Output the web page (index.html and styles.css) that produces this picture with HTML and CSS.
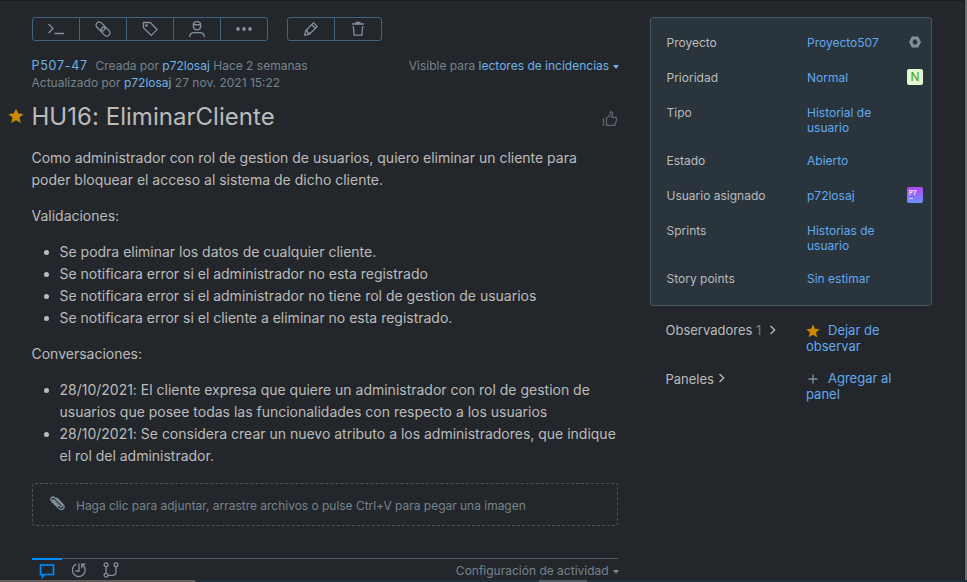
FILE: index.html
```html
<!DOCTYPE html>
<html lang="es">
<head>
<meta charset="utf-8">
<title>P507-47 HU16: EliminarCliente</title>
<link rel="stylesheet" href="styles.css">
</head>
<body>
<div class="window">
<div class="page">
  <main class="issue">
    <div class="toolbar">
      <div class="group">
        <button><svg width="18" height="16" viewBox="0 0 18 16"><path d="M1.500 3l4.500 4.500L1.500 12M7.500 12.500H17"/></svg></button>
        <button><svg width="16" height="16" viewBox="0 0 16 16"><rect x="0.500" y="2.300" width="10" height="6.200" rx="3.100" transform="rotate(45 5.500 5.400)"/><rect x="5.500" y="7.500" width="10" height="6.200" rx="3.100" transform="rotate(45 10.500 10.600)"/></svg></button>
        <button><svg width="16" height="16" viewBox="0 0 16 16"><path d="M1.500 1.500h6.700L15 8.600 9.300 14.400 1.500 6.800z"/><circle cx="4.500" cy="4.500" r=".7"/></svg></button>
        <button><svg width="18" height="18" viewBox="0 0 18 18"><path d="M5.300 5.200C5.300 2.700 6.500 1.600 9 1.600s3.700 1.100 3.700 3.600c0 2.900-1.500 4.600-3.700 4.600S5.300 8.100 5.300 5.200zM5.600 4.300c2 .6 4.800.6 6.800 0M1.600 17c.2-3 2-4.400 4.600-4.400h5.600c2.600 0 4.400 1.400 4.600 4.400"/></svg></button>
        <button><svg class="fill" width="18" height="16" viewBox="0 0 18 16"><circle cx="3" cy="8" r="1.900"/><circle cx="9" cy="8" r="1.900"/><circle cx="15" cy="8" r="1.900"/></svg></button>
      </div>
      <div class="group">
        <button><svg width="16" height="16" viewBox="0 0 16 16"><path d="M1.800 14.200l1-4.600L10.500 1.800l3.700 3.700-7.700 7.700zM8.700 3.700l3.600 3.600M2.800 9.600l1.500.3.300 1.700 1.700.2.200 1.400"/></svg></button>
        <button><svg width="16" height="16" viewBox="0 0 16 16"><path d="M2 3h12M5.500 1.500h5M3.300 5l.8 9.200h7.800l.8-9.200"/></svg></button>
      </div>
    </div>
    <div class="meta">
      <div><a class="id">P507-47</a>Creada por <a>p72losaj</a> Hace 2 semanas<br>Actualizado por <a>p72losaj</a> 27 nov. 2021 15:22</div>
      <div class="visibility">Visible para <a>lectores de incidencias <i class="caret"></i></a></div>
    </div>
    <div class="heading">
      <svg class="star" width="16" height="16" viewBox="0 0 16 16"><path d="M8 .5l2.200 5 5.500.5-4.200 3.600 1.300 5.500L8 12.200l-4.800 2.900 1.300-5.500L.3 6l5.500-.5z"/></svg>
      <h1>HU16: EliminarCliente</h1>
      <svg class="thumb" width="16" height="16" viewBox="0 0 16 16"><path d="M1.500 7v8M4.500 14.300V7.200l3.200-2.700L8.500 1h1.300l.8 1-.9 4.300h4.800v3.200l-1.700 4.800z"/></svg>
    </div>
    <article>
      <p>Como administrador con rol de gestion de usuarios, quiero eliminar un cliente para<br>poder bloquear el acceso al sistema de dicho cliente.</p>
      <p>Validaciones:</p>
      <ul>
        <li>Se podra eliminar los datos de cualquier cliente.</li>
        <li>Se notificara error si el administrador no esta registrado</li>
        <li>Se notificara error si el administrador no tiene rol de gestion de usuarios</li>
        <li>Se notificara error si el cliente a eliminar no esta registrado.</li>
      </ul>
      <p>Conversaciones:</p>
      <ul>
        <li>28/10/2021: El cliente expresa que quiere un administrador con rol de gestion de<br>usuarios que posee todas las funcionalidades con respecto a los usuarios</li>
        <li>28/10/2021: Se considera crear un nuevo atributo a los administradores, que indique<br>el rol del administrador.</li>
      </ul>
    </article>
    <div class="attach">
      <svg width="17" height="16" viewBox="0 0 17 16"><path d="M4.300 4.500l6.800 6.700c1.600 1.500 3-.1 1.700-1.500L6 3C3.300.6.100 3.700 2.700 6.400l6.500 6.500c4 3.800 8-.2 4.400-4L7.500 2.700M4.200 4.400c-1 1 .1 2 .1 2l5 5"/></svg>
      <span>Haga clic para adjuntar, arrastre archivos o pulse Ctrl+V para pegar una imagen</span>
    </div>
    <div class="activity">
      <div class="tab active"><svg width="16" height="16" viewBox="0 0 16 16"><path d="M1.500 2h13v9.500h-9L3.500 14v-2.500h-2z"/></svg></div>
      <div class="tab"><svg width="16" height="16" viewBox="0 0 16 16"><path d="M5.300 2.200a6.400 6.400 0 1 0 8.300 3.200M8 1.500V9H4.500M14.500 2.200h-3.700v4M11 2.500l3 3"/></svg></div>
      <div class="tab"><svg width="16" height="16" viewBox="0 0 16 16"><circle cx="3" cy="2.700" r="1.900"/><circle cx="13" cy="2.700" r="1.900"/><circle cx="3" cy="13.300" r="1.900"/><path d="M3 4.600v6.800M5 13.300h4c2 0 4-1 4-3.300V4.600"/></svg></div>
      <div class="settings">Configuración de actividad <i class="caret"></i></div>
    </div>
  </main>
  <aside>
    <div class="panel">
      <div class="field"><span>Proyecto</span><a>Proyecto507</a><svg class="nut" width="12" height="12" viewBox="0 0 12 12"><path d="M3.800 1.900h4.400L10.300 6l-2.100 4.100H3.800L1.700 6z"/></svg></div>
      <div class="field"><span>Prioridad</span><a>Normal</a><b class="priority">N</b></div>
      <div class="field"><span>Tipo</span><a>Historial de usuario</a></div>
      <div class="field"><span>Estado</span><a>Abierto</a></div>
      <div class="field"><span>Usuario asignado</span><a>p72losaj</a><b class="avatar">P7</b></div>
      <div class="field"><span>Sprints</span><a>Historias de usuario</a></div>
      <div class="field"><span>Story points</span><a>Sin estimar</a></div>
    </div>
    <div class="extras">
      <div class="extra"><span>Observadores <em>1</em><svg class="chev" width="8" height="10" viewBox="0 0 8 10"><path d="M1.500 1l4.200 4-4.200 4"/></svg></span><a><svg class="star" width="14" height="14" viewBox="0 0 16 16"><path d="M8 .5l2.200 5 5.500.5-4.200 3.600 1.300 5.500L8 12.200l-4.800 2.900 1.300-5.500L.3 6l5.500-.5z"/></svg>Dejar de observar</a></div>
      <div class="extra boards"><span>Paneles<svg class="chev" width="8" height="10" viewBox="0 0 8 10"><path d="M1.500 1l4.200 4-4.200 4"/></svg></span><a><svg class="plus" width="14" height="14" viewBox="0 0 14 14"><path d="M7 2.500v9M2.500 7h9"/></svg>Agregar al panel</a></div>
    </div>
  </aside>
</div>
<div class="edge"></div>
</div>
<div class="strip"><i class="left"></i><i class="thumbbar"></i></div>
</body>
</html>
```
FILE: styles.css
```css
* { box-sizing: border-box; }
body { margin: 0; width: 967px; height: 582px; overflow: hidden; background: #23272b; color: #bbb; font: 13px/17px Inter, sans-serif; }
a { color: #70b1e6; }
svg { fill: none; stroke: #80919d; stroke-width: 1.3; display: block; }
.window { display: flex; height: 580px; }
.page { flex: 1; height: 580px; border-top: 1px solid #191b1d; border-right: 1px solid #191c1f; border-top-right-radius: 3px; display: flex; overflow: hidden; }
.edge { width: 2px; background: #6b7075; }
.issue { width: 586px; margin-left: 32px; flex: none; }
.toolbar { display: flex; gap: 19px; margin-top: 16px; }
.group { display: flex; height: 24px; border: 1px solid #406380; border-radius: 3px; }
.group button { width: 47px; padding: 0; border: 0; border-right: 1px solid #406380; background: none; display: flex; align-items: center; justify-content: center; }
.group button:last-child { width: 46px; border-right: 0; }
.fill { fill: #80919d; stroke: none; }
.meta { display: flex; justify-content: space-between; margin: 16px -0.5px 0 -0.5px; color: #75838c; font-size: 12px; }
.id { margin-right: 7.500px; font-size: 12.500px; letter-spacing: .75px; }
.caret { display: inline-block; border: 3px solid transparent; border-top: 4px solid currentColor; border-bottom: 0; vertical-align: 1.500px; }
.heading { display: flex; align-items: center; margin: 10px 0 0 -24px; height: 32px; }
.star { fill: #cb8900; stroke: none; }
.heading .star { margin-top: -2px; }
h1 { flex: 1; margin: 0 0 0 7.500px; font-size: 24px; line-height: 32px; font-weight: 400; letter-spacing: .03px; }
.thumb { stroke: #59656d; margin-top: 4px; }
article { margin: 14px 0 0 -0.5px; font-size: 14px; line-height: 22px; letter-spacing: -0.006px; white-space: nowrap; }
article p { margin: 0 0 14px; }
article ul { margin: 0 0 14px; padding-left: 28px; }
.attach { display: flex; align-items: center; gap: 10px; height: 43px; margin-top: 16px; padding-left: 16px; border: 1px dashed #49555d; border-radius: 3px; color: #75838c; font-size: 12px; letter-spacing: -0.02px; }
.attach svg { margin-top: -4px; }
.attach span { margin-top: 2px; }
.activity { display: flex; margin-top: 32px; height: 22px; border-top: 1px solid #4c5960; color: #75838c; font-size: 12px; }
.tab { width: 32px; padding: 3px 0 0 7px; }
.tab.active { width: 30px; margin: -1px 2px 0 0; padding-top: 3px; border-top: 2px solid #008eff; }
.active svg { stroke: #008eff; stroke-width: 1.6; }
.settings { margin: 3px -1px 0 auto; }
.settings .caret { margin-left: 1px; }
aside { width: 282px; margin: 16px 0 0 32px; flex: none; }
.panel { height: 289px; border: 1px solid #49565e; border-radius: 3px; background: #29343c; padding: 17px 8px 0 15.500px; }
.field { display: grid; grid-template-columns: 140.5px 76px 1fr; font-size: 12px; line-height: 15px; min-height: 17px; margin-bottom: 18px; }
.field a, .extra a { color: #62a9f0; }
.field > :nth-child(3) { justify-self: end; }
.nut { stroke: #80919d; stroke-width: 3; margin: 1px 2px 0 0; }
.priority, .avatar { width: 16px; height: 16px; margin: -1px 0; border-radius: 2px; text-align: center; font-weight: 400; }
.priority { background: #e6f6cf; color: #4da400; }
.avatar { background: linear-gradient(#b345f1, #6b94ff); color: #eee; font-size: 6px; line-height: 11px; font-weight: 700; text-align: left; padding-left: 2px; }
.avatar::after { content: ""; display: block; width: 4px; height: 1px; background: #d5cfff; }
.extras { padding: 16px 0 0 15.500px; line-height: 16px; }
.extra { display: grid; grid-template-columns: 140.5px 96px; margin-bottom: 16px; }
.boards > span { padding-top: 1px; }
em { font-style: normal; color: #75838c; }
.chev { display: inline-block; stroke: #bbb; margin-left: 5px; }
.boards .chev { margin-left: 4px; vertical-align: 1px; }
em + .chev { margin-left: 8px; }
.extra a svg { display: inline-block; vertical-align: -3px; margin-right: 8px; }
.strip { display: flex; height: 2px; background: #1c333e; }
.left { width: 195px; background: #62605f; }
.thumbbar { width: 48px; margin-left: 344px; background: #505a62; }
```
